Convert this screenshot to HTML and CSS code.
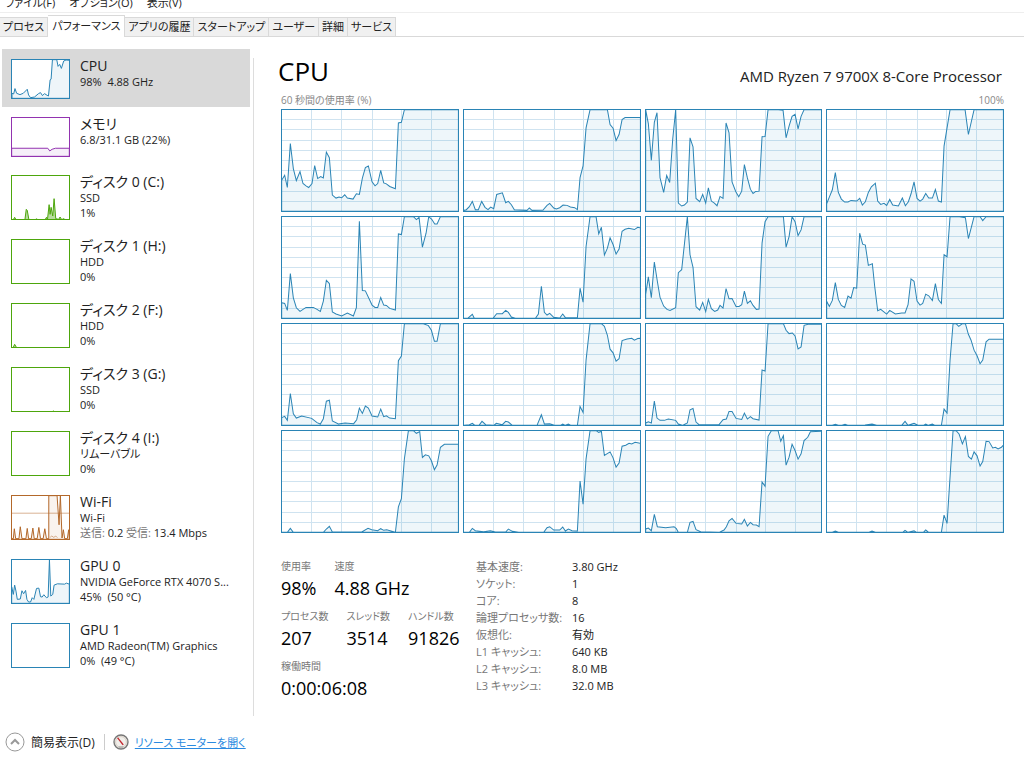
FILE: index.html
```html
<!DOCTYPE html>
<html lang="ja">
<head>
  <meta charset="UTF-8">
  <meta name="viewport" content="width=device-width, initial-scale=1.0">
  <title>タスク マネージャー</title>
  <link rel="stylesheet" href="styles.css">
</head>
<body>

  <svg class="defs" aria-hidden="true">
    <defs>
      <path id="grid" d="M90 0V307M180 0V307M271 0V307M359 0V307M449 0V307M0 31H530M0 61H530M0 92H530M0 123H530M0 153H530M0 184H530M0 215H530M0 246H530M0 276H530" />
    </defs>
  </svg>

  <nav class="menu">
    <button type="button">ファイル(F)</button>
    <button type="button">オプション(O)</button>
    <button type="button">表示(V)</button>
  </nav>

  <nav class="tabs">
    <button type="button">プロセス</button>
    <button type="button" class="active">パフォーマンス</button>
    <button type="button">アプリの履歴</button>
    <button type="button">スタートアップ</button>
    <button type="button">ユーザー</button>
    <button type="button">詳細</button>
    <button type="button">サービス</button>
  </nav>

  <div class="content">
    <aside class="sidebar">
      <button type="button" class="item short selected">
        <svg class="thumb blue" viewBox="0 1 172 113" preserveAspectRatio="none"><path d="M0 100L5 102 9 86 14 100 24 104 34 100 46 88 50 105 56 113 68 111 80 101 86 98 92 107 98 101 106 106 110 108 115 60 118 58 122 0 135 0 139 20 144 14 149 26 156 4 163 1 174 2V115H0Z" /></svg>
        <span class="info"><span class="name">CPU</span><span>98%&nbsp; 4.88 GHz</span></span>
      </button>
      <button type="button" class="item short">
        <svg class="thumb purple" viewBox="1 1 172 113" preserveAspectRatio="none"><path d="M0 91H109L115 99 122 94 132 91H174V115H0Z" /></svg>
        <span class="info"><span class="name">メモリ</span><span>6.8/31.1 GB (22%)</span></span>
      </button>
      <button type="button" class="item">
        <svg class="thumb green" viewBox="1 0 172 129" preserveAspectRatio="none"><path d="M0 132L5 131 9 124 13 131H40L44 100 47 103 52 131H72L75 128 78 131H101L105 124 108 131 113 86 116 115 119 94 124 120 128 68 133 128 142 130 146 123 151 131 157 128 161 131H174V132Z" /></svg>
        <span class="info"><span class="name">ディスク 0 (C:)</span><span>SSD</span><span>1%</span></span>
      </button>
      <button type="button" class="item">
        <svg class="thumb green" viewBox="0 0 174 132"></svg>
        <span class="info"><span class="name">ディスク 1 (H:)</span><span>HDD</span><span>0%</span></span>
      </button>
      <button type="button" class="item">
        <svg class="thumb green" viewBox="1 0 172 129" preserveAspectRatio="none"><path d="M0 132H4L9 121 15 131H174V132Z" /></svg>
        <span class="info"><span class="name">ディスク 2 (F:)</span><span>HDD</span><span>0%</span></span>
      </button>
      <button type="button" class="item">
        <svg class="thumb green" viewBox="1 0 172 129" preserveAspectRatio="none"><path d="M0 132H120L126 129 132 132Z" /></svg>
        <span class="info"><span class="name">ディスク 3 (G:)</span><span>SSD</span><span>0%</span></span>
      </button>
      <button type="button" class="item">
        <svg class="thumb green" viewBox="0 0 174 132"></svg>
        <span class="info"><span class="name">ディスク 4 (I:)</span><span>リムーバブル</span><span>0%</span></span>
      </button>
      <button type="button" class="item">
        <svg class="thumb orange" viewBox="1 1 172 130" preserveAspectRatio="none">
          <path class="faint" d="M0 53H174" />
          <path d="M0 130H5L8 100 12 130H22L26 94 31 130H43L47 99 51 130H59L64 98 68 130H77L82 96 87 130H95L100 100 105 130H112V0H137L143 88 147 0 152 128 156 103 160 130H168L172 103 174 130V132H0Z" />
          <path class="faint" d="M116 126L121 122 127 126 133 122 138 127" />
        </svg>
        <span class="info"><span class="name">Wi-Fi</span><span>Wi-Fi</span><span><i>送信:</i> 0.2 <i>受信:</i> 13.4 Mbps</span></span>
      </button>
      <button type="button" class="item">
        <svg class="thumb blue" viewBox="1 1 172 130" preserveAspectRatio="none"><path d="M0 82L5 105 9 77 13 95 17 120 26 119 31 94 36 103 42 93 46 120 51 128 57 128 62 115 67 120 75 87 82 86 87 112 92 113 97 106 105 115 110 113 114 0 118 110 124 105 128 77 138 73 160 74 165 71 174 74V132H0Z" /></svg>
        <span class="info"><span class="name">GPU 0</span><span>NVIDIA GeForce RTX 4070 S...</span><span>45%&nbsp; (50 °C)</span></span>
      </button>
      <button type="button" class="item">
        <svg class="thumb blue" viewBox="0 0 174 132"></svg>
        <span class="info"><span class="name">GPU 1</span><span>AMD Radeon(TM) Graphics</span><span>0%&nbsp; (49 °C)</span></span>
      </button>
    </aside>

    <main class="detail">
      <header class="heading">
        <h1>CPU</h1>
        <p>AMD Ryzen 7 9700X 8-Core Processor</p>
      </header>
      <div class="scale">
        <span>60 秒間の使用率 (%)</span>
        <span>100%</span>
      </div>

      <div class="cores">
        <svg viewBox="1 1 527 305" preserveAspectRatio="none"><use href="#grid" /><path d="M0 213L9 198 17 235 26 102 35 178 44 214 55 187 64 223 73 230 81 235 91 223 99 169 108 208 117 202 125 206 134 128 143 145 152 258 163 267 172 264 180 266 189 257 197 267 214 270 224 254 233 256 242 207 251 175 260 170 271 218 280 230 288 223 297 183 306 221 314 224 324 232 341 239 350 40 359 38 368 0 530 0V307H0Z" /></svg>
        <svg viewBox="1 1 527 305" preserveAspectRatio="none"><use href="#grid" /><path d="M0 304L8 302 17 293 26 277 35 302 44 302 54 277 64 295 73 302 81 294 90 299 99 256 116 251 126 281 134 277 143 287 152 302 190 304 197 297 205 304 238 303 250 289 258 283 270 297 278 300 288 296 298 288 310 289 320 294 333 296 341 302 349 205 358 170 367 55 379 0 431 0 439 45 448 56 457 93 466 75 475 30 484 24 530 24V307H0Z" /></svg>
        <svg viewBox="1 1 527 305" preserveAspectRatio="none"><use href="#grid" /><path d="M0 0L8 42 17 153 26 38 34 9 43 205 54 250 63 199 72 220 81 90 90 0 98 282 108 291 116 288 125 279 133 85 142 112 151 268 162 278 171 256 180 282 188 236 197 276 206 282 214 290 223 262 232 268 241 40 250 70 259 218 270 247 279 263 288 246 296 166 305 206 314 240 322 253 330 247 340 246 349 82 358 81 367 0 398 0 412 2 421 85 430 50 439 20 448 14 457 58 466 20 475 0 530 0V307H0Z" /></svg>
        <svg viewBox="1 1 527 305" preserveAspectRatio="none"><use href="#grid" /><path d="M0 284L8 264 17 242 26 190 35 250 44 270 54 279 64 279 73 274 90 276 99 268 107 288 116 278 125 250 134 233 146 222 153 276 162 286 172 283 180 289 189 271 198 288 215 291 227 267 236 290 245 278 253 254 262 218 271 268 280 276 288 270 297 253 306 267 317 267 326 241 335 276 344 279 352 110 370 0 415 0 425 75 442 0 530 0V307H0Z" /></svg>

        <svg viewBox="1 1 527 305" preserveAspectRatio="none"><use href="#grid" /><path d="M0 260L9 262 17 283 26 172 35 245 44 275 55 286 73 274 95 274 106 280 116 286 125 255 134 192 143 202 152 288 163 294 180 300 197 291 215 300 224 275 233 14 242 223 251 224 271 267 280 274 288 274 297 244 306 267 314 268 324 277 341 282 350 52 359 54 368 0 395 0 404 9 412 2 422 92 433 50 441 0 450 8 459 22 466 22 476 0 530 0V307H0Z" /></svg>
        <svg viewBox="1 1 527 305" preserveAspectRatio="none"><use href="#grid" /><path d="M0 307L12 307 26 295 32 307 88 307 99 293 116 293 126 283 134 289 143 303 155 307 215 307 224 294 233 210 242 289 250 297 258 292 270 304 288 306 297 294 305 305 341 305 349 216 358 258 367 90 379 0 397 0 405 52 413 32 422 116 431 95 439 64 448 84 457 113 466 98 475 44 484 38 495 35 512 39 522 32 530 34V307H0Z" /></svg>
        <svg viewBox="1 1 527 305" preserveAspectRatio="none"><use href="#grid" /><path d="M0 235L8 182 17 245 26 137 35 195 43 243 54 270 64 280 73 283 90 275 98 169 108 160 125 0 133 115 142 153 151 272 162 282 171 259 180 287 188 250 197 278 207 286 216 282 223 268 232 276 241 217 250 248 259 247 271 271 280 271 288 266 296 225 305 262 314 254 322 268 332 280 340 279 349 80 358 15 367 0 413 0 421 92 430 60 439 0 448 15 457 57 466 40 475 0 530 0V307H0Z" /></svg>
        <svg viewBox="1 1 527 305" preserveAspectRatio="none"><use href="#grid" /><path d="M0 255L8 271 17 253 26 199 35 250 44 268 54 274 64 240 73 246 81 214 90 216 99 50 108 83 116 86 125 147 137 142 144 210 153 284 162 280 180 294 189 283 206 294 225 291 235 291 244 266 253 188 262 195 271 255 280 267 288 262 297 234 306 239 317 253 326 202 335 250 344 262 352 115 361 121 370 0 398 0 416 3 425 66 442 0 460 0 468 12 478 0 530 0V307H0Z" /></svg>

        <svg viewBox="1 1 527 305" preserveAspectRatio="none"><use href="#grid" /><path d="M0 284L9 280 17 292 26 211 35 272 44 285 60 279 90 286 106 299 116 303 125 287 134 234 143 231 152 294 170 303 190 300 216 302 225 290 233 255 242 271 251 249 260 255 271 279 288 282 297 258 306 281 314 278 324 285 341 287 350 112 359 98 368 0 425 0 440 6 449 20 458 53 466 53 476 0 530 0V307H0Z" /></svg>
        <svg viewBox="1 1 527 305" preserveAspectRatio="none"><use href="#grid" /><path d="M0 307L17 305 26 301 34 307 46 307 55 295 66 305 90 307 98 301 116 305 126 295 134 297 146 307 220 307 233 275 242 303 258 302 272 307 290 307 297 303 305 307 314 303 322 307 341 307 349 250 358 268 367 110 379 0 413 0 422 8 431 35 439 77 448 88 457 113 466 106 475 51 490 46 504 44 512 50 522 45 530 44V307H0Z" /></svg>
        <svg viewBox="1 1 527 305" preserveAspectRatio="none"><use href="#grid" /><path d="M0 300L8 296 17 300 26 234 34 285 43 292 56 292 68 288 90 292 98 303 110 307 125 300 133 260 142 256 151 297 160 305 220 305 232 290 242 288 250 265 259 265 271 286 288 289 296 270 305 288 314 281 322 287 340 291 349 140 358 143 367 0 413 0 421 20 430 30 440 28 448 37 457 76 466 70 475 5 490 1 530 2V307H0Z" /></svg>
        <svg viewBox="1 1 527 305" preserveAspectRatio="none"><use href="#grid" /><path d="M0 307L17 307 26 304 35 307 46 307 55 304 63 307 115 306 136 303 150 307 225 307 235 295 244 307 262 301 275 307 290 307 297 303 305 307 317 303 325 307 344 307 352 258 361 270 370 110 379 0 388 0 396 8 407 0 416 0 425 32 433 50 442 80 451 97 460 121 468 110 478 55 487 47 530 47V307H0Z" /></svg>

        <svg viewBox="1 1 527 305" preserveAspectRatio="none"><use href="#grid" /><path d="M0 307L17 307 26 295 35 307 125 307 134 297 143 289 152 306 240 306 259 295 270 299 288 302 297 296 306 301 315 299 325 302 341 307 350 230 359 205 368 85 380 0 395 0 404 8 414 3 422 81 431 73 441 76 449 91 458 118 466 104 476 50 488 41 530 41V307H0Z" /></svg>
        <svg viewBox="1 1 527 305" preserveAspectRatio="none"><use href="#grid" /><path d="M0 307L17 307 26 295 35 302 60 305 80 302 95 306 126 306 134 297 146 304 165 307 240 307 250 293 258 290 270 300 288 300 297 291 305 303 314 297 325 302 341 303 349 152 358 222 367 85 379 0 397 0 405 5 413 2 422 75 439 64 448 82 457 110 466 98 475 47 486 44 496 38 504 40 514 35 530 38V307H0Z" /></svg>
        <svg viewBox="1 1 527 305" preserveAspectRatio="none"><use href="#grid" /><path d="M0 297L8 294 17 302 26 253 35 290 60 293 85 290 92 296 98 307 125 307 133 277 142 274 151 299 165 305 220 307 235 300 242 290 250 272 259 265 271 280 288 282 296 268 305 288 314 277 322 284 332 285 340 290 349 155 358 168 367 17 377 0 397 0 405 32 413 15 421 104 430 80 439 41 448 60 457 86 466 70 475 30 486 20 494 3 530 2V307H0Z" /></svg>
        <svg viewBox="1 1 527 305" preserveAspectRatio="none"><use href="#grid" /><path d="M0 307L17 307 26 303 35 307 127 307 136 303 146 307 228 307 235 301 244 307 262 302 270 307 290 307 297 300 306 307 344 307 352 255 361 280 379 0 388 0 397 10 407 40 416 18 425 78 434 86 442 64 451 76 460 107 468 93 478 32 487 33 498 52 506 50 514 55 524 50 530 43V307H0Z" /></svg>
      </div>

      <div class="stats">
        <div class="live">
          <dl>
            <div><dt>使用率</dt><dd>98%</dd></div>
            <div><dt>速度</dt><dd>4.88 GHz</dd></div>
          </dl>
          <dl>
            <div><dt>プロセス数</dt><dd>207</dd></div>
            <div><dt>スレッド数</dt><dd>3514</dd></div>
            <div><dt>ハンドル数</dt><dd>91826</dd></div>
          </dl>
          <dl>
            <div><dt>稼働時間</dt><dd>0:00:06:08</dd></div>
          </dl>
        </div>
        <table class="specs">
          <tr><th>基本速度:</th><td>3.80 GHz</td></tr>
          <tr><th>ソケット:</th><td>1</td></tr>
          <tr><th>コア:</th><td>8</td></tr>
          <tr><th>論理プロセッサ数:</th><td>16</td></tr>
          <tr><th>仮想化:</th><td>有効</td></tr>
          <tr><th>L1 キャッシュ:</th><td>640 KB</td></tr>
          <tr><th>L2 キャッシュ:</th><td>8.0 MB</td></tr>
          <tr><th>L3 キャッシュ:</th><td>32.0 MB</td></tr>
        </table>
      </div>
    </main>
  </div>

  <footer class="bottom">
    <button type="button">
      <svg width="20" height="20" viewBox="0 0 20 20" fill="none"><circle cx="10" cy="10" r="9" stroke="#999" /><path d="M6 12L10 8L14 12" stroke="#999" stroke-width="2" /></svg>
      簡易表示(D)
    </button>
    <a href="#">
      <svg width="16" height="16" viewBox="0 0 16 16"><circle cx="8" cy="8" r="7" fill="#f1efeb" stroke="#777" stroke-width="1.4" /><circle cx="8" cy="8" r="5.4" fill="none" stroke="#d8d0c6" /><path d="M4 4L5.2 3.4L10.8 10.4L9.6 11.2Z" fill="#c2262e" /><path d="M5.5 13H10.5" stroke="#999" /></svg>
      <span>リソース モニターを開く</span>
    </a>
  </footer>

</body>
</html>
```
FILE: styles.css
```css
* {
  box-sizing: border-box;
}

body {
  margin: 0;
  background: #fff;
  color: #222;
  font-family: "Open Sans", "Noto Sans CJK JP", sans-serif;
  font-size: 11px;
  line-height: 15px;
  font-feature-settings: "palt";
  overflow: hidden;
}

button {
  margin: 0;
  padding: 0;
  border: none;
  background: none;
  color: inherit;
  font: inherit;
  font-feature-settings: inherit;
  cursor: pointer;
}

.defs {
  position: absolute;
  width: 0;
  height: 0;
}

/* menu and tabs */
.menu {
  display: flex;
  gap: 14px;
  margin-top: -5px;
  padding: 0 5px 1px;
  border-bottom: 1px solid #eee;
}

.menu button {
  line-height: 16px;
}

.tabs {
  display: flex;
  align-items: flex-end;
  height: 24px;
  border-bottom: 1px solid #d9d9d9;
}

.tabs button {
  height: 19px;
  padding: 0 3px;
  border: 1px solid #d9d9d9;
  border-left: none;
  border-bottom: none;
  background: #f0f0f0;
  line-height: 18px;
}

.tabs .active {
  height: 22px;
  margin-bottom: -1px;
  padding: 0 4px 2px;
  background: #fff;
}

/* left list */
.content {
  display: flex;
  padding-top: 12px;
}

.sidebar {
  display: flex;
  flex-direction: column;
  flex: none;
  width: 250px;
  padding-left: 2px;
}

.item {
  display: flex;
  align-items: flex-start;
  gap: 10px;
  height: 64px;
  padding: 10px 0 0 9px;
  text-align: left;
  white-space: nowrap;
}

.short {
  height: 58px;
}

.selected {
  background: #d9d9d9;
}

.thumb {
  flex: none;
  width: 59px;
  height: 45px;
  border: 1px solid;
  background: #fff;
}

.short .thumb {
  height: 40px;
}

.thumb path {
  fill: currentColor;
  fill-opacity: 0.08;
  stroke: currentColor;
  vector-effect: non-scaling-stroke;
}

.thumb .faint {
  fill: none;
  stroke-opacity: 0.5;
}

.blue {
  color: #2a84b5;
}

.purple {
  color: #9233b0;
}

.green {
  color: #4da60c;
}

.green path {
  fill-opacity: 0.4;
}

.orange {
  color: #b3682a;
}

.info {
  display: flex;
  flex-direction: column;
  margin-top: -2px;
}

.name {
  font-size: 14px;
  line-height: 17px;
}

.info i {
  color: #777;
  font-style: normal;
}

/* right side */
.detail {
  flex: 1;
  margin: 9px 20px 0 3px;
  padding-left: 27px;
  border-left: 1px solid #ddd;
  height: 658px;
}

.heading {
  display: flex;
  justify-content: space-between;
  align-items: flex-end;
  margin-left: -3px;
}

.heading h1 {
  margin: 0;
  color: #000;
  font-size: 26px;
  font-weight: normal;
  line-height: 26px;
}

.heading p {
  margin: 0;
  padding-right: 2px;
  font-size: 15px;
  line-height: 16px;
}

.scale {
  display: flex;
  justify-content: space-between;
  padding: 8px 0 1px;
  color: #888;
  font-size: 10px;
  line-height: 16px;
}

.cores {
  display: grid;
  grid-template-columns: repeat(4, 1fr);
  gap: 4px;
}

.cores svg {
  display: block;
  width: 100%;
  height: 103px;
  border: 1px solid #2a84b5;
}

.cores path {
  fill: #117dbb;
  fill-opacity: 0.07;
  stroke: #2a84b5;
  vector-effect: non-scaling-stroke;
}

#grid {
  fill: none;
  stroke: #cfe3f0;
  vector-effect: non-scaling-stroke;
  shape-rendering: crispEdges;
}

.stats {
  display: flex;
  padding-top: 25px;
}

.live {
  width: 195px;
}

.live dl {
  display: flex;
  gap: 18px;
  margin: 0 0 6px;
}

.live dt {
  color: #777;
  font-size: 10px;
  line-height: 17px;
}

.live dd {
  margin: 0;
  color: #000;
  font-size: 18px;
  line-height: 27px;
}

.specs {
  border-collapse: collapse;
  align-self: flex-start;
}

.specs th {
  width: 96px;
  padding: 0;
  color: #777;
  font-weight: normal;
  text-align: left;
  line-height: 17px;
}

.specs td {
  padding: 0;
}

/* bottom bar */
.bottom {
  display: flex;
  align-items: center;
  padding: 16px 5px;
}

.bottom button,
.bottom a {
  display: flex;
  align-items: center;
  gap: 6px;
}

.bottom button {
  font-size: 12px;
}

.bottom a {
  margin-left: 9px;
  padding-left: 8px;
  border-left: 1px solid #ccc;
  color: #2a8ae0;
}
```
